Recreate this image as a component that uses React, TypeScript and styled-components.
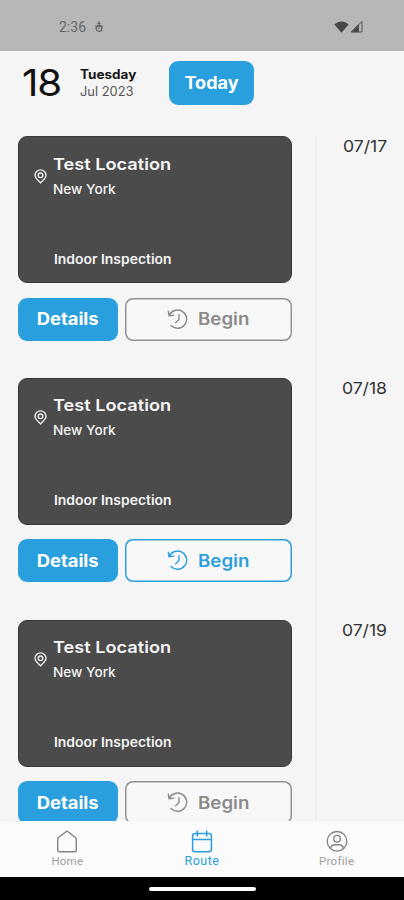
import React from "react";
import styled, { createGlobalStyle } from "styled-components";

const BLUE = "#2a9fdd";

const GlobalStyle = createGlobalStyle`
  *, *::before, *::after { box-sizing: border-box; }
  body { margin: 0; background: #f5f5f5; font-family: "Inter", "Liberation Sans", sans-serif; }
  button { font-family: inherit; padding: 0; margin: 0; }
`;

const Screen = styled.div`
  width: 404px;
  height: 900px;
  display: flex;
  flex-direction: column;
  overflow: hidden;
  background: #f5f5f5;
`;

const StatusBar = styled.header`
  height: 51px;
  flex: none;
  display: flex;
  align-items: center;
  justify-content: space-between;
  padding: 2px 41px 0 59px;
  background: #b7b7b7;
  color: #666;
`;

const StatusGroup = styled.div<{ $gap: number }>`
  display: flex;
  align-items: center;
  gap: ${(p) => p.$gap}px;
  svg { display: block; }
`;

const Label = styled.span<{
  $size: number;
  $line: number;
  $weight?: number;
  $track?: number;
  $color?: string;
  $stretch?: number;
  $origin?: "left" | "center" | "right";
}>`
  display: block;
  white-space: nowrap;
  font-size: ${(p) => p.$size}px;
  line-height: ${(p) => p.$line}px;
  font-weight: ${(p) => p.$weight ?? 400};
  letter-spacing: ${(p) => p.$track ?? 0}px;
  color: ${(p) => p.$color ?? "inherit"};
  transform: scaleX(${(p) => p.$stretch ?? 1});
  transform-origin: ${(p) => p.$origin ?? "left"} center;
`;

const Clock = styled(Label)`
  font-family: Roboto, sans-serif;
`;

const DateHeader = styled.section`
  height: 85px;
  flex: none;
  display: flex;
  align-items: flex-start;
  padding: 10px 0 0 22px;
`;

const DayNumber = styled(Label)`
  width: 58px;
`;

const DateText = styled.div`
  width: 89px;
  padding-top: 5px;
`;

const SolidButton = styled.button<{ $width: number; $height?: number }>`
  width: ${(p) => p.$width}px;
  height: ${(p) => p.$height ?? 43}px;
  display: flex;
  align-items: center;
  justify-content: center;
  border: 0;
  border-radius: 9px;
  background: ${BLUE};
  color: #fff;
`;

const OutlineButton = styled.button<{ $active: boolean }>`
  flex: 1;
  height: 43px;
  display: flex;
  align-items: center;
  justify-content: center;
  gap: 9px;
  padding-right: 4px;
  border: 0;
  border-radius: 8px;
  box-shadow: inset 0 0 0 1.5px ${(p) => (p.$active ? BLUE : "#929292")};
  background: #f8f8f8;
  color: ${(p) => (p.$active ? BLUE : "#8a8a8a")};
  svg { display: block; }
`;

const Schedule = styled.main`
  flex: 1;
  min-height: 0;
  display: flex;
  overflow: hidden;
`;

const Stops = styled.div`
  width: 317px;
  flex: none;
  padding: 0 23.5px 0 18px;
  border-right: 2px solid #f0f0f0;
`;

const Dates = styled.div`
  flex: 1;
`;

const DateSlot = styled.div`
  height: 241.8px;
  padding: 0 17px 0 0;
  display: flex;
  justify-content: flex-end;
`;

const Stop = styled.article`
  height: 241.8px;
`;

const Card = styled.div`
  height: 147px;
  display: flex;
  padding: 16.5px 15px 0 15px;
  border-radius: 9px;
  border: 1px solid #393939;
  background: #4b4b4b;
  color: #f5f5f5;
`;

const PinSlot = styled.div`
  width: 19px;
  flex: none;
  padding-top: 15px;
  svg { display: block; }
`;

const CardText = styled.div`
  display: flex;
  flex-direction: column;
`;

const Kind = styled(Label)`
  margin: 50px 0 0 1px;
`;

const Actions = styled.div`
  display: flex;
  gap: 7px;
  padding-top: 14.5px;
`;

const TabBar = styled.nav`
  height: 56px;
  flex: none;
  display: grid;
  grid-template-columns: repeat(3, 1fr);
  background: #fbfbfb;
`;

const Tab = styled.div<{ $active?: boolean }>`
  display: flex;
  flex-direction: column;
  align-items: center;
  padding-top: 9px;
  color: ${(p) => (p.$active ? BLUE : "#858585")};
  svg { display: block; }
`;

const TabLabel = styled(Label)`
  font-family: Roboto, sans-serif;
`;

const SystemBar = styled.footer`
  height: 23px;
  flex: none;
  display: flex;
  justify-content: center;
  padding-top: 9.5px;
  background: #000;
`;

const Handle = styled.div`
  width: 107px;
  height: 4.5px;
  border-radius: 3px;
  background: #fff;
`;

const DebugIcon = () => (
  <svg width="10" height="12" viewBox="0 0 10 12" fill="none" stroke="#626262" strokeWidth="1.2">
    <circle cx="5" cy="7.4" r="2.9" />
    <path d="M5 .2v3.6M3.4 2.6h3.2M1.2 5.2h7.6M5 6.5v1.6" />
  </svg>
);

const WifiIcon = () => (
  <svg width="15" height="12" viewBox="0 0 15 12" fill="#484848">
    <path d="M0.4 3.4C4.4-.6 10.6-.6 14.6 3.4L7.5 11.8Z" />
  </svg>
);

const SignalIcon = () => (
  <svg width="13" height="13" viewBox="0 0 13 13">
    <path d="M.5 12.3 9 3.8v8.5Z" fill="#484848" />
    <path d="M1.4 12 12 1.4V12Z" fill="none" stroke="#555" strokeWidth="1" />
  </svg>
);

const PinIcon = () => (
  <svg width="13" height="15" viewBox="0 0 13 15" fill="none" stroke="#eee" strokeWidth="1.4">
    <path d="M6.5 13.8C5.4 12.4 1 9.5 1 6.2a5.5 5.3 0 0 1 11 0c0 3.3-4.4 6.2-5.5 7.6Z" />
    <circle cx="6.5" cy="6.3" r="2.3" />
  </svg>
);

const HistoryIcon = () => (
  <svg width="22" height="21" viewBox="0 0 22 21" fill="none" stroke="currentColor" strokeWidth="1.4" strokeLinecap="round" strokeLinejoin="round">
    <path d="M1.3 2.1 2.1 6.8 6.8 6.1M2.2 6.6A9.1 9.1 0 1 1 4 16.4" />
    <path d="M12 5.8v4.8L8.7 13.7" />
  </svg>
);

const HomeIcon = () => (
  <svg width="22" height="24" viewBox="0 0 22 24" fill="none" stroke="currentColor" strokeWidth="1.45" strokeLinejoin="round">
    <path d="M1.7 9.2Q1.7 8.2 2.5 7.5L10 1.7Q11 .9 12 1.7L19.5 7.5Q20.3 8.2 20.3 9.2V20Q20.3 21.8 18.5 21.8H3.5Q1.7 21.8 1.7 20Z" />
  </svg>
);

const CalendarIcon = () => (
  <svg width="22" height="24" viewBox="0 0 22 24" fill="none" stroke="currentColor" strokeWidth="1.5" strokeLinecap="round">
    <rect x="1.6" y="3.6" width="18.8" height="18.2" rx="2.5" />
    <path d="M1.6 9.6h18.8M6.3 1v5M15.7 1v5" />
  </svg>
);

const ProfileIcon = () => (
  <svg width="22" height="24" viewBox="0 0 22 24" fill="none" stroke="currentColor" strokeWidth="1.4">
    <circle cx="11" cy="11.3" r="9.8" />
    <circle cx="11" cy="8.7" r="3.3" />
    <path d="M4.6 18.7Q5.2 14.8 9 14.8h4Q16.8 14.8 17.4 18.7" />
  </svg>
);

const stops = [
  { date: "07/17", active: false },
  { date: "07/18", active: true },
  { date: "07/19", active: false },
];

export default function App() {
  return (
    <Screen>
      <GlobalStyle />
      <StatusBar>
        <StatusGroup $gap={8}>
          <Clock $size={14} $line={16}>2:36</Clock>
          <DebugIcon />
        </StatusGroup>
        <StatusGroup $gap={1}>
          <WifiIcon />
          <SignalIcon />
        </StatusGroup>
      </StatusBar>
      <DateHeader>
        <DayNumber $size={37} $line={44} $track={-1} $stretch={1.09} $color="#111">18</DayNumber>
        <DateText>
          <Label $size={12.5} $line={17} $weight={700} $stretch={1.08} $color="#161616">Tuesday</Label>
          <Label $size={12.5} $line={17} $stretch={1.03} $color="#555">Jul 2023</Label>
        </DateText>
        <SolidButton $width={85} $height={44}>
          <Label $size={17} $line={20} $weight={700} $stretch={1.06} $origin="center">Today</Label>
        </SolidButton>
      </DateHeader>
      <Schedule>
        <Stops>
          {stops.map((stop) => (
            <Stop key={stop.date}>
              <Card>
                <PinSlot>
                  <PinIcon />
                </PinSlot>
                <CardText>
                  <Label $size={16.5} $line={21} $weight={600} $stretch={1.1}>Test Location</Label>
                  <Label $size={13} $line={28} $weight={500} $stretch={1.05}>New York</Label>
                  <Kind $size={13} $line={13} $weight={600} $stretch={1.07}>Indoor Inspection</Kind>
                </CardText>
              </Card>
              <Actions>
                <SolidButton $width={100}>
                  <Label $size={17} $line={20} $weight={700} $stretch={1.08} $origin="center">Details</Label>
                </SolidButton>
                <OutlineButton $active={stop.active}>
                  <HistoryIcon />
                  <Label $size={17} $line={20} $weight={600} $stretch={1.1}>Begin</Label>
                </OutlineButton>
              </Actions>
            </Stop>
          ))}
        </Stops>
        <Dates>
          {stops.map((stop) => (
            <DateSlot key={stop.date}>
              <Label $size={16} $line={21} $stretch={1.1} $origin="right" $color="#333">{stop.date}</Label>
            </DateSlot>
          ))}
        </Dates>
      </Schedule>
      <TabBar>
        <Tab>
          <HomeIcon />
          <TabLabel $size={11.5} $line={14} $track={0.2} $color="#a0a0a0">Home</TabLabel>
        </Tab>
        <Tab $active>
          <CalendarIcon />
          <TabLabel $size={12.5} $line={13} $track={0.5}>Route</TabLabel>
        </Tab>
        <Tab>
          <ProfileIcon />
          <TabLabel $size={11.5} $line={15} $track={0.3} $color="#a0a0a0">Profile</TabLabel>
        </Tab>
      </TabBar>
      <SystemBar>
        <Handle />
      </SystemBar>
    </Screen>
  );
}
